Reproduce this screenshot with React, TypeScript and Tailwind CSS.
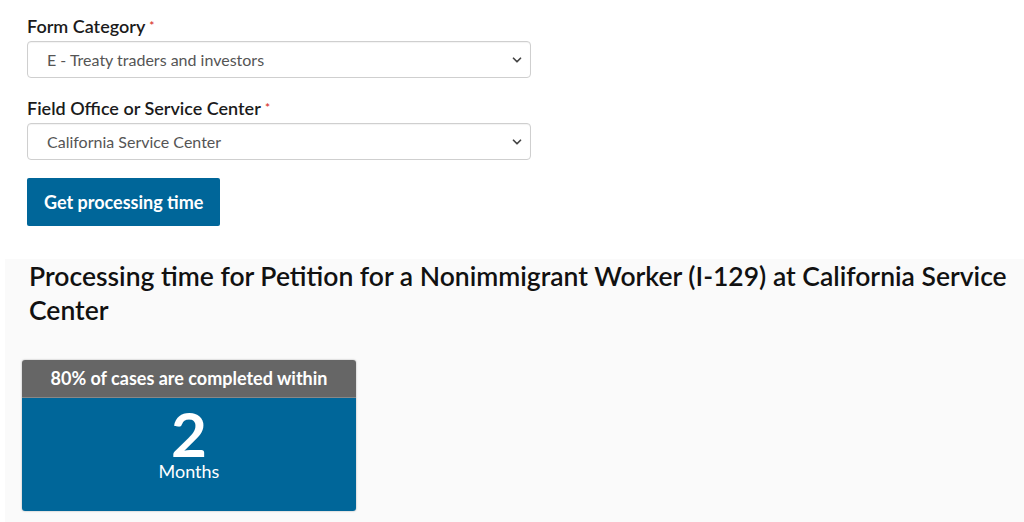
import { ChevronDown } from 'lucide-react';

const font = { fontFamily: 'Lato, "Open Sans", sans-serif' };

const SelectField = ({ label, value }: { label: string; value: string }) => (
  <div className="flex flex-col">
    <label className="text-[18px] font-semibold text-[#1b1b1b] leading-[22px] mb-[4px]">
      {label} <span className="text-[#d9352d] text-[12px] align-top">*</span>
    </label>
    <div className="relative w-[504px] h-[37px] border border-[#cfcfcf] rounded-[4px] bg-white flex items-center pl-[19px] shadow-[inset_0_1px_1px_rgba(0,0,0,0.05)]">
      <span className="text-[16px] text-[#555] leading-[20px]">{value}</span>
      <ChevronDown className="absolute right-[6px] top-[11px] h-[14px] w-[14px] text-[#444]" strokeWidth={3} />
    </div>
  </div>
);

export default function App() {
  return (
    <div className="w-[1024px] h-[522px] bg-white overflow-hidden" style={font}>
      <div className="pl-[27px] pt-[15px] flex flex-col">
        <SelectField label="Form Category" value="E - Treaty traders and investors" />
        <div className="h-[19px]" />
        <SelectField label="Field Office or Service Center" value="California Service Center" />
        <button className="mt-[18px] w-[193px] h-[48px] bg-[#006699] rounded-[2px] text-white text-[18px] font-bold text-left pl-[17px]">
          Get processing time
        </button>
      </div>
      <div className="mt-[33px] ml-[5px] bg-[#fafafa] h-[300px]">
        <h2 className="pl-[24px] pr-[10px] text-[26.5px] leading-[34px] font-semibold text-[#111]">
          Processing time for Petition for a Nonimmigrant Worker (I-129) at California Service Center
        </h2>
        <div className="ml-[17px] mt-[33px] w-[334px] rounded-[3px] overflow-hidden shadow-[0_0_2px_rgba(0,0,0,0.35)]">
          <div className="h-[38px] bg-[#666666] text-white text-[18px] font-bold flex items-center justify-center border-b border-[#888]">
            80% of cases are completed within
          </div>
          <div className="h-[113px] bg-[#006699] text-white flex flex-col items-center pt-[7px]">
            <div className="text-[62px] font-bold leading-[56px]">2</div>
            <div className="text-[18px] leading-[20px]">Months</div>
          </div>
        </div>
      </div>
    </div>
  );
}
